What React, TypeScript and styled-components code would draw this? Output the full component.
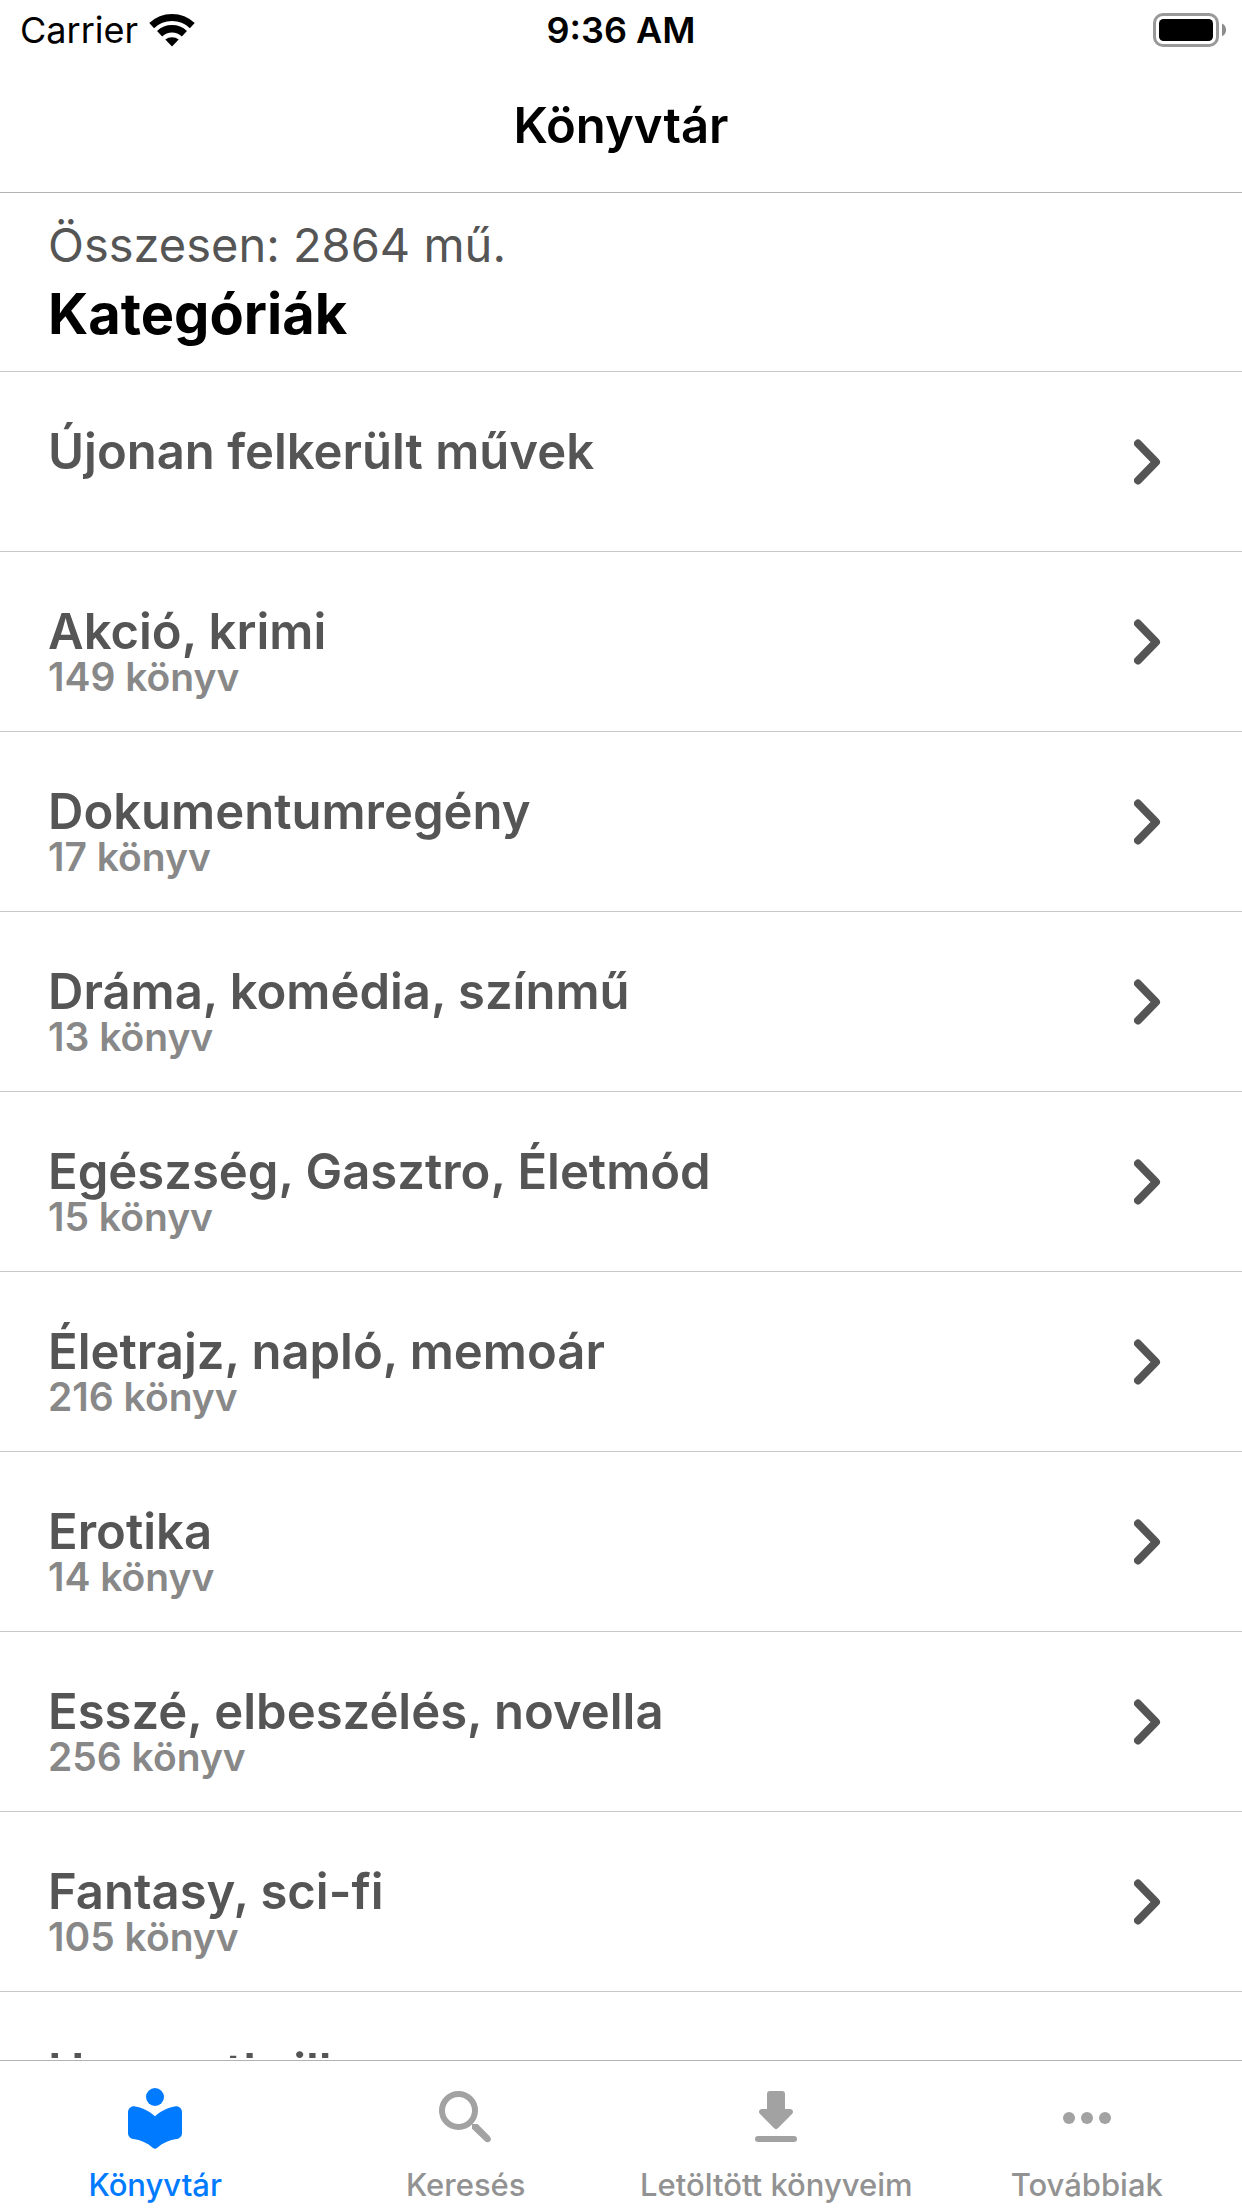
import React from 'react';
import styled, { createGlobalStyle } from 'styled-components';

const GlobalStyle = createGlobalStyle`
  * { box-sizing: border-box; }
  body {
    margin: 0;
    background: #fff;
    color: #000;
    font-family: Inter, "Liberation Sans", sans-serif;
  }
  h1, h2, p, ul { margin: 0; padding: 0; }
  ul { list-style: none; }
  a { color: inherit; text-decoration: none; }
  svg { display: block; flex: none; }
`;

const Screen = styled.div`
  display: flex;
  flex-direction: column;
  gap: 2px;
  height: 100vh;
`;

const Content = styled.div`
  flex: 1;
  min-height: 0;
  display: flex;
  flex-direction: column;
`;

const Header = styled.header`
  flex: none;
  border-bottom: 1px solid #b2b2b2;
`;

const StatusBar = styled.div`
  display: grid;
  grid-template-columns: 1fr auto 1fr;
  align-items: center;
  height: 60px;
  padding: 0 16px;
  font-size: 36px;
  line-height: 60px;
`;

const Carrier = styled.div`
  display: flex;
  align-items: center;
  gap: 10px;
  padding-left: 4px;
`;

const Clock = styled.time`
  font-weight: 600;
`;

const Battery = styled.div`
  justify-self: end;
`;

const Title = styled.h1`
  height: 132px;
  font-size: 49px;
  font-weight: 600;
  line-height: 132px;
  text-align: center;
`;

const Main = styled.main`
  flex: 1;
  min-height: 0;
  overflow: hidden;
`;

const Summary = styled.section`
  height: 179px;
  padding: 20px 48px;
  border-bottom: 1px solid #c8c8c8;
`;

const Total = styled.p`
  color: #555;
  font-size: 47px;
  font-weight: 400;
  line-height: 64px;
`;

const Heading = styled.h2`
  font-size: 56px;
  font-weight: 700;
  line-height: 74px;
`;

const Row = styled.a`
  display: flex;
  align-items: center;
  justify-content: space-between;
  height: 180px;
  padding: 0 78px 0 48px;
  border-bottom: 1px solid #c8c8c8;
`;

const RowText = styled.div`
  align-self: flex-start;
  padding-top: 52px;
  font-weight: 600;
`;

const RowTitle = styled.div`
  color: #555;
  font-size: 49px;
  line-height: 56px;
`;

const RowCount = styled.div`
  color: #888;
  font-size: 39px;
  line-height: 34px;
`;

const TabBar = styled.nav`
  flex: none;
  display: grid;
  grid-template-columns: repeat(4, 1fr);
  height: 148px;
  border-top: 1px solid #b2b2b2;
`;

const Tab = styled.a<{ $active?: boolean }>`
  display: flex;
  flex-direction: column;
  align-items: center;
  gap: 13px;
  padding-top: 21px;
  color: ${(p) => (p.$active ? '#007aff' : '#929292')};
  font-size: 31px;
  font-weight: 500;
  line-height: 36px;
  white-space: nowrap;

  svg { color: ${(p) => (p.$active ? '#007aff' : '#a2a2a2')}; }
`;

const WifiIcon = () => (
  <svg width="48" height="36" viewBox="0 0 48 36" fill="none" stroke="#000" aria-hidden="true">
    <path d="M3.7 13.6A29.5 29.5 0 0 1 44.3 13.6" strokeWidth="7" />
    <path d="M11.6 21.7A18 18 0 0 1 36.4 21.7" strokeWidth="7.4" />
    <path d="M24 34.4 17.3 27.6A10.4 10.4 0 0 1 30.7 27.6Z" fill="#000" stroke="none" />
  </svg>
);

const BatteryIcon = () => (
  <svg width="73" height="34" viewBox="0 0 73 34" aria-hidden="true">
    <rect x="1.5" y="1.5" width="63" height="31" rx="8.5" fill="none" stroke="#999" strokeWidth="3" />
    <rect x="6" y="6" width="54" height="22" rx="4.5" />
    <path d="M69 10.5C74.4 13 74.4 20.8 69 23.3Z" fill="#8c8c8c" />
  </svg>
);

const ChevronIcon = () => (
  <svg width="30" height="48" viewBox="0 0 30 48" fill="none" stroke="#555" strokeWidth="8" strokeLinecap="round" strokeLinejoin="round" aria-hidden="true">
    <path d="M4 5.500 22 24 4 42.500" />
  </svg>
);

const ReaderIcon = () => (
  <svg width="72" height="72" viewBox="0 0 72 72" fill="currentColor" aria-hidden="true">
    <circle cx="36" cy="15" r="9" />
    <path d="M36 34.3C30.5 29 23.5 25.6 16 24.4C12.2 23.8 9 26.6 9 30.3V51C9 54.2 11.3 56.7 14.4 57.1C21.5 58 28.5 61 34 65.9C35.2 67 36.8 67 38 65.9C43.5 61 50.5 58 57.6 57.1C60.7 56.7 63 54.2 63 51V30.3C63 26.6 59.8 23.8 56 24.4C48.5 25.6 41.5 29 36 34.3Z" />
  </svg>
);

const SearchIcon = () => (
  <svg width="72" height="72" viewBox="0 0 72 72" fill="none" stroke="currentColor" strokeWidth="6" aria-hidden="true">
    <circle cx="28.5" cy="28.5" r="16.5" />
    <path d="M42 42H47.6L59.2 53.7C61.5 56 61.3 58 60 59.3C58.5 60.7 56.5 60.7 54.8 59L42 46.8Z" fill="currentColor" stroke="none" />
  </svg>
);

const DownloadIcon = () => (
  <svg width="72" height="72" viewBox="0 0 72 72" fill="currentColor" aria-hidden="true">
    <path d="M30 9H42A3 3 0 0 1 45 12V27H49.8C52.8 27 54 30 52 32L38.1 46.1A3 3 0 0 1 33.9 46.1L20 32C18 30 19.2 27 22.2 27H27V12A3 3 0 0 1 30 9Z" />
    <rect x="15" y="54" width="42" height="6" rx="3" />
  </svg>
);

const MoreIcon = () => (
  <svg width="72" height="72" viewBox="0 0 72 72" fill="currentColor" aria-hidden="true">
    <circle cx="18" cy="36" r="6" />
    <circle cx="36" cy="36" r="6" />
    <circle cx="54" cy="36" r="6" />
  </svg>
);

const categories: { name: string; count?: number }[] = [
  { name: 'Újonan felkerült művek' },
  { name: 'Akció, krimi', count: 149 },
  { name: 'Dokumentumregény', count: 17 },
  { name: 'Dráma, komédia, színmű', count: 13 },
  { name: 'Egészség, Gasztro, Életmód', count: 15 },
  { name: 'Életrajz, napló, memoár', count: 216 },
  { name: 'Erotika', count: 14 },
  { name: 'Esszé, elbeszélés, novella', count: 256 },
  { name: 'Fantasy, sci-fi', count: 105 },
  { name: 'Horror, thriller' },
];

const tabs = [
  { label: 'Könyvtár', Icon: ReaderIcon },
  { label: 'Keresés', Icon: SearchIcon },
  { label: 'Letöltött könyveim', Icon: DownloadIcon },
  { label: 'Továbbiak', Icon: MoreIcon },
];

export default function App() {
  return (
    <Screen>
      <GlobalStyle />
      <Content>
        <Header>
          <StatusBar>
            <Carrier>
              Carrier
              <WifiIcon />
            </Carrier>
            <Clock>9:36 AM</Clock>
            <Battery>
              <BatteryIcon />
            </Battery>
          </StatusBar>
          <Title>Könyvtár</Title>
        </Header>
        <Main>
          <Summary>
            <Total>Összesen: 2864 mű.</Total>
            <Heading>Kategóriák</Heading>
          </Summary>
          <ul>
            {categories.map(({ name, count }) => (
              <li key={name}>
                <Row href="#">
                  <RowText>
                    <RowTitle>{name}</RowTitle>
                    {count !== undefined && <RowCount>{count} könyv</RowCount>}
                  </RowText>
                  <ChevronIcon />
                </Row>
              </li>
            ))}
          </ul>
        </Main>
      </Content>
      <TabBar>
        {tabs.map(({ label, Icon }, i) => (
          <Tab key={label} href="#" $active={i === 0} aria-current={i === 0 ? 'page' : undefined}>
            <Icon />
            {label}
          </Tab>
        ))}
      </TabBar>
    </Screen>
  );
}
